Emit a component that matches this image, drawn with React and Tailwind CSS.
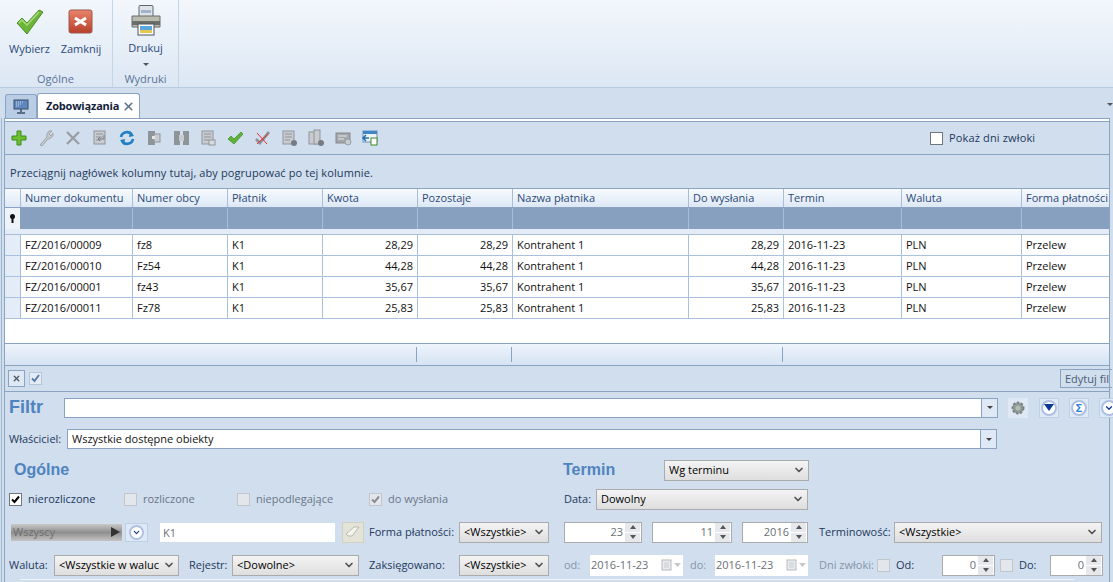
import { ChevronDown, X } from "lucide-react";

const font = { fontFamily: '"Open Sans", "Noto Sans", sans-serif' };

const columns = [
  { label: "Numer dokumentu", w: "w-[112px]" },
  { label: "Numer obcy", w: "w-[95px]" },
  { label: "Płatnik", w: "w-[95px]" },
  { label: "Kwota", w: "w-[95px]", right: true },
  { label: "Pozostaje", w: "w-[95px]", right: true },
  { label: "Nazwa płatnika", w: "w-[176px]" },
  { label: "Do wysłania", w: "w-[95px]", right: true },
  { label: "Termin", w: "w-[118px]" },
  { label: "Waluta", w: "w-[120px]" },
  { label: "Forma płatności", w: "w-[100px]" },
];

const rows = [
  ["FZ/2016/00009", "fz8", "K1", "28,29", "28,29", "Kontrahent 1", "28,29", "2016-11-23", "PLN", "Przelew"],
  ["FZ/2016/00010", "Fz54", "K1", "44,28", "44,28", "Kontrahent 1", "44,28", "2016-11-23", "PLN", "Przelew"],
  ["FZ/2016/00001", "fz43", "K1", "35,67", "35,67", "Kontrahent 1", "35,67", "2016-11-23", "PLN", "Przelew"],
  ["FZ/2016/00011", "Fz78", "K1", "25,83", "25,83", "Kontrahent 1", "25,83", "2016-11-23", "PLN", "Przelew"],
];

function BigCheck() {
  return (
    <svg width="28" height="26" viewBox="0 0 28 26">
      <path d="M1 14 L6 9 L11 14 L23 1 L27 3 L11 25 Z" fill="#6cb43a" stroke="#4d8f2a" strokeWidth="1" />
      <path d="M3 14 L6 11 L11 16 L23 3" fill="none" stroke="#a9dc7c" strokeWidth="1.5" />
    </svg>
  );
}

function BigClose() {
  return (
    <svg width="26" height="26" viewBox="0 0 26 26">
      <defs>
        <linearGradient id="closeFill" x1="0" y1="0" x2="0" y2="1">
          <stop offset="0" stopColor="#e8846c" />
          <stop offset="1" stopColor="#b8402a" />
        </linearGradient>
      </defs>
      <rect x="1" y="1" width="23" height="23" rx="2" fill="url(#closeFill)" stroke="#9c5a4a" />
      <path d="M7 9 L18 16 M18 9 L7 16" stroke="#fff" strokeWidth="3" />
    </svg>
  );
}

function Printer() {
  return (
    <svg width="30" height="31" viewBox="0 0 30 31">
      <rect x="8" y="0.5" width="14" height="11" rx="1" fill="#dfe3e8" stroke="#5d6670" />
      <rect x="10" y="5" width="10" height="3" fill="#9fb4cc" />
      <path d="M1 11 H29 V22 H1 Z" fill="#b9bbb1" stroke="#686c66" />
      <rect x="1" y="16" width="28" height="4" fill="#6a6e68" />
      <rect x="7" y="19" width="16" height="11" fill="#fff" stroke="#4d555e" />
      <path d="M9 21 H21 V25 H9 Z" fill="#5aa6dc" />
      <path d="M9 25 H21 V28 H9 Z" fill="#e5c84e" />
    </svg>
  );
}

function MonitorIcon() {
  return (
    <svg width="16" height="15" viewBox="0 0 16 15">
      <rect x="1" y="1" width="14" height="9" fill="#5f86bd" stroke="#3d4f6b" />
      <path d="M3 3 H11 M3 5 H9 M3 7 H7" stroke="#cfe0f4" strokeDasharray="1 1" />
      <path d="M8 10 V13 M4 14 H12" stroke="#3d4f6b" strokeWidth="1.5" />
    </svg>
  );
}

function ToolIcon({ children }) {
  return (
    <div className="w-[27px] flex items-center justify-center shrink-0">
      <svg width="18" height="18" viewBox="0 0 18 18">{children}</svg>
    </div>
  );
}

function GreyDoc({ extra }) {
  return (
    <>
      <rect x="3" y="2" width="11" height="13" fill="#c8ccd0" stroke="#8f9499" />
      <path d="M5 5 H12 M5 8 H12 M5 11 H10" stroke="#8f9499" />
      {extra}
    </>
  );
}

function Toolbar() {
  return (
    <div className="flex items-center">
      <ToolIcon>
        <path d="M7 2 H11 V7 H16 V11 H11 V16 H7 V11 H2 V7 H7 Z" fill="#6cbf2e" stroke="#3f8a1c" />
      </ToolIcon>
      <ToolIcon>
        <path d="M3 16 L10 8 C9 4 12 1 15 2 L12 5 L14 7 L16 4 C17 8 13 10 11 10 L5 17 Z" fill="#c4c7ca" stroke="#a3a7ab" />
      </ToolIcon>
      <ToolIcon>
        <path d="M3 3 L15 15 M15 3 L3 15" stroke="#9a9fa5" strokeWidth="2.4" />
      </ToolIcon>
      <ToolIcon>
        <GreyDoc extra={<path d="M7 10 H13 V6 M7 10 L9 8 M7 10 L9 12" stroke="#777c82" fill="none" />} />
      </ToolIcon>
      <ToolIcon>
        <path d="M3 8 A6 6 0 0 1 14 6 M15 10 A6 6 0 0 1 4 12" fill="none" stroke="#1f7fc4" strokeWidth="2.6" />
        <path d="M12 2 L16 7 L11 8 Z M6 16 L2 11 L7 10 Z" fill="#1f7fc4" />
      </ToolIcon>
      <ToolIcon>
        <rect x="3" y="2" width="7" height="14" fill="#8f9499" />
        <rect x="9" y="5" width="6" height="8" fill="#c8ccd0" stroke="#8f9499" />
        <rect x="7" y="7" width="3" height="3" fill="#e4e7ea" />
      </ToolIcon>
      <ToolIcon>
        <rect x="2" y="2" width="6" height="14" fill="#8f9499" />
        <rect x="11" y="2" width="6" height="14" fill="#8f9499" />
        <rect x="7" y="6" width="5" height="6" fill="#c8ccd0" />
      </ToolIcon>
      <ToolIcon>
        <GreyDoc extra={<rect x="10" y="11" width="6" height="5" fill="#d8dbde" stroke="#8f9499" />} />
      </ToolIcon>
      <ToolIcon>
        <path d="M2 10 L5 7 L8 10 L15 3 L17 5 L8 15 Z" fill="#5cb536" stroke="#3e8a24" strokeWidth="0.7" />
      </ToolIcon>
      <ToolIcon>
        <path d="M2 11 L4 9 L7 12 L15 2 L17 4 L7 16 Z" fill="#8d9197" />
        <path d="M4 4 L14 15 M15 5 L4 15" stroke="#e8302f" strokeWidth="1" />
      </ToolIcon>
      <ToolIcon>
        <GreyDoc extra={<circle cx="14" cy="14" r="3" fill="#777c82" />} />
      </ToolIcon>
      <ToolIcon>
        <rect x="2" y="3" width="8" height="12" fill="#c8ccd0" stroke="#8f9499" />
        <rect x="7" y="1" width="6" height="14" fill="#c8ccd0" stroke="#8f9499" />
        <circle cx="14" cy="14" r="3" fill="#777c82" />
      </ToolIcon>
      <ToolIcon>
        <rect x="2" y="4" width="14" height="10" fill="#a3a7ab" stroke="#85898e" />
        <path d="M4 7 H13 M4 10 H10" stroke="#e4e7ea" />
        <circle cx="14" cy="13" r="3" fill="#c8ccd0" stroke="#9a9fa5" />
      </ToolIcon>
      <ToolIcon>
        <rect x="2" y="2" width="14" height="11" fill="#eef3f8" stroke="#6a8fb5" />
        <rect x="2" y="2" width="14" height="3" fill="#3f86c8" />
        <path d="M2 9 H8 M5 6 L2 9 L5 12" stroke="#1f6fae" strokeWidth="1.5" fill="none" />
        <rect x="10" y="9" width="6" height="7" fill="#fff" stroke="#3e8a24" />
      </ToolIcon>
    </div>
  );
}

function Check({ checked, disabled, className = "" }) {
  return (
    <span
      className={`w-[13px] h-[13px] border shrink-0 flex items-center justify-center ${
        disabled ? "border-[#c2c6cb] bg-[#e3e6ea]" : "border-[#70767d] bg-white"
      } ${className}`}
    >
      {checked && (
        <svg width="11" height="11" viewBox="0 0 11 11">
          <path d="M2 5.5 L4.5 8 L9 2.5" fill="none" stroke={disabled ? "#8a8d91" : "#000"} strokeWidth="2" />
        </svg>
      )}
    </span>
  );
}

function Select({ value, w, ml = "" }) {
  return (
    <div
      className={`h-[21px] ${w} ${ml} shrink-0 flex items-center justify-between border border-[#a9abad] bg-gradient-to-b from-[#f4f4f4] to-[#dedede] pl-[4px] pr-[3px] overflow-hidden`}
    >
      <span className="whitespace-nowrap overflow-hidden text-black">{value}</span>
      <ChevronDown size={12} strokeWidth={3.5} className="text-[#555] shrink-0 ml-[3px]" />
    </div>
  );
}

function Spin({ value, w, ml = "" }) {
  return (
    <div className={`h-[21px] ${w} ${ml} shrink-0 flex items-center justify-end border border-[#a9abad] bg-white text-[#6a6f75]`}>
      <span>{value}</span>
      <div className="ml-[2px] mr-px w-[15px] h-[19px] flex flex-col gap-px">
        <div className="flex-1 flex items-center justify-center bg-[#e6e8eb]">
          <span className="w-0 h-0 border-x-[3px] border-x-transparent border-b-[4px] border-b-[#555]" />
        </div>
        <div className="flex-1 flex items-center justify-center bg-[#e6e8eb]">
          <span className="w-0 h-0 border-x-[3px] border-x-transparent border-t-[4px] border-t-[#555]" />
        </div>
      </div>
    </div>
  );
}

function DateBox({ value, ml = "" }) {
  return (
    <div className={`h-[21px] w-[93px] ${ml} shrink-0 flex items-center bg-white pl-px text-[#6a6f75]`}>
      <span>{value}</span>
      <svg width="22" height="12" viewBox="0 0 22 12" className="ml-auto">
        <rect x="1" y="1" width="9" height="10" fill="#e9ecef" stroke="#b5b9be" />
        <path d="M3 4 H8 M3 6 H8 M3 8 H8" stroke="#c8ccd0" />
        <path d="M13 4 H20 L16.5 8 Z" fill="#c5c8cc" />
      </svg>
    </div>
  );
}

function RoundIcon({ children, className = "" }) {
  return (
    <div className={`w-[20px] h-[20px] shrink-0 flex items-center justify-center bg-[#dfe9f6] border border-[#bcd0e8] ${className}`}>
      <div className="w-[16px] h-[16px] rounded-full bg-white border-2 border-[#aebfe0] flex items-center justify-center">{children}</div>
    </div>
  );
}

function Ribbon() {
  return (
    <div className="h-[88px] flex bg-gradient-to-b from-[#f3f7fc] to-[#dce7f4] border-b border-[#b9cbe0] text-[#2b4a78]">
      <div className="w-[113px] border-r border-[#c5d5e8] flex flex-col">
        <div className="flex pl-[9px] pt-[9px] h-[72px]">
          <div className="w-[42px] flex flex-col items-center">
            <div className="h-[26px] flex items-center"><BigCheck /></div>
            <span className="mt-[6px] -ml-px">Wybierz</span>
          </div>
          <div className="w-[44px] ml-[8px] flex flex-col items-center">
            <div className="h-[26px] flex items-center"><BigClose /></div>
            <span className="mt-[6px]">Zamknij</span>
          </div>
        </div>
        <div className="text-center text-[#5a7395] -ml-px">Ogólne</div>
      </div>
      <div className="w-[66px] border-r border-[#c5d5e8] flex flex-col items-center">
        <div className="h-[72px] pt-[5px] flex flex-col items-center">
          <Printer />
          <span className="mt-[4px]">Drukuj</span>
          <span className="mt-[6px] w-0 h-0 border-x-[3px] border-x-transparent border-t-[3px] border-t-[#555]" />
        </div>
        <div className="text-[#5a7395]">Wydruki</div>
      </div>
    </div>
  );
}

function TabStrip() {
  return (
    <div className="h-[30px] flex items-end pl-[5px] bg-[#d0deee] relative">
      <div className="w-[32px] h-[24px] flex items-center justify-center bg-[#b9cde4] border border-b-0 border-[#8aa3c2] rounded-t-[3px]">
        <MonitorIcon />
      </div>
      <div className="w-[103px] h-[25px] flex items-center pl-[8px] bg-white border border-b-0 border-[#8aa3c2] rounded-t-[3px] font-bold text-[#14233a] tracking-[-0.2px]">
        Zobowiązania
        <X size={13} strokeWidth={3} className="ml-[3px] text-[#5f7189]" />
      </div>
      <span className="absolute right-0 top-[15px] w-0 h-0 border-x-[3px] border-x-transparent border-t-[3px] border-t-[#555]" />
    </div>
  );
}

function Grid() {
  return (
    <div className="text-[#111] whitespace-nowrap">
      <div className="flex h-[20px] bg-gradient-to-b from-[#f7fafe] to-[#dde8f5] border-y border-[#8aa3c2] text-[#2b4a78]">
        <div className="w-[16px] shrink-0 border-r border-[#a9bdd6]" />
        {columns.map((c) => (
          <div key={c.label} className={`${c.w} shrink-0 pl-[4px] border-r border-[#a9bdd6] leading-[18px]`}>
            {c.label}
          </div>
        ))}
      </div>
      <div className="flex h-[21px] bg-[#88a0bf]">
        <div className="w-[15px] shrink-0 mr-px bg-[#eef3f9] flex items-center justify-center">
          <svg width="7" height="9" viewBox="0 0 7 9">
            <circle cx="3.5" cy="2.5" r="2.5" fill="#111" />
            <rect x="2.5" y="4" width="2" height="5" fill="#111" />
          </svg>
        </div>
        {columns.map((c) => (
          <div key={c.label} className={`${c.w} shrink-0 border-r border-[#a9bdd6]`} />
        ))}
      </div>
      <div className="h-[6px] bg-[#e3ecf7] border-b border-[#a9bdd6]" />
      {rows.map((row) => (
        <div key={row[0]} className="flex h-[21px] bg-white border-b border-[#a9c1de]">
          <div className="w-[16px] shrink-0 bg-[#e3ecf7] border-r border-[#a9bdd6]" />
          {row.map((cell, i) => (
            <div
              key={i}
              className={`${columns[i].w} shrink-0 pl-[4px] pr-[4px] leading-[20px] border-r border-[#a9c1de] ${columns[i].right ? "text-right" : ""}`}
            >
              {cell}
            </div>
          ))}
        </div>
      ))}
      <div className="h-[24px] bg-white" />
      <div className="flex h-[23px] py-[3px] bg-gradient-to-b from-[#eef4fc] to-[#d6e3f3] border-y border-[#8aa3c2]">
        <div className="w-[412px] shrink-0 border-r border-[#8aa3c2]" />
        <div className="w-[95px] shrink-0 border-r border-[#8aa3c2]" />
        <div className="w-[271px] shrink-0 border-r border-[#8aa3c2]" />
      </div>
    </div>
  );
}

function FilterPanel() {
  return (
    <div className="text-[#1e395b]">
      <div className="h-[26px] flex items-center pl-[3px] border-b border-[#8aa3c2]">
        <div className="w-[17px] h-[17px] border border-[#8aa3c2] bg-[#dfe9f6] flex items-center justify-center">
          <X size={9} strokeWidth={3.5} className="text-[#4a5564]" />
        </div>
        <div className="ml-[4px] w-[13px] h-[13px] border border-[#b6c6da] bg-[#e3ebf5] flex items-center justify-center">
          <svg width="11" height="11" viewBox="0 0 11 11">
            <path d="M2 5.5 L4.5 8 L9 2" fill="none" stroke="#5a7ba8" strokeWidth="2" />
          </svg>
        </div>
        <div className="ml-auto -mr-[3px] h-[19px] w-[52px] shrink-0 pl-[4px] border border-r-0 border-[#8aa3c2] text-[#4a5d75] leading-[17px] whitespace-nowrap">
          Edytuj fil
        </div>
      </div>

      <div className="h-[31px] flex items-center">
        <span className="w-[59px] shrink-0 pl-[4px] text-[18px] font-bold text-[#4f83c0]" style={{ fontFamily: '"Liberation Sans", sans-serif' }}>
          Filtr
        </span>
        <div className="w-[934px] h-[20px] shrink-0 flex bg-white border border-[#8aa3c2]">
          <div className="ml-auto w-[16px] bg-[#dfe9f6] border-l border-[#8aa3c2] flex items-center justify-center">
            <span className="w-0 h-0 border-x-[3px] border-x-transparent border-t-[3px] border-t-[#444]" />
          </div>
        </div>
        <div className="w-[20px] h-[20px] ml-[10px] shrink-0 bg-[#dfe9f6] flex items-center justify-center">
          <svg width="16" height="16" viewBox="0 0 16 16">
            <circle cx="8" cy="8" r="5.5" fill="#8f9a96" stroke="#7a8480" strokeWidth="2" strokeDasharray="2.5 1.5" />
            <circle cx="8" cy="8" r="2.5" fill="#b4bcb8" />
          </svg>
        </div>
        <RoundIcon className="ml-[11px]">
          <span className="w-0 h-0 border-x-[5px] border-x-transparent border-t-[7px] border-t-[#0a3a94]" />
        </RoundIcon>
        <RoundIcon className="ml-[10px]">
          <span className="text-[11px] leading-none font-bold text-[#2a7de1]">Σ</span>
        </RoundIcon>
        <RoundIcon className="ml-[10px]">
          <ChevronDown size={10} strokeWidth={3} className="text-[#0a3a94]" />
        </RoundIcon>
      </div>

      <div className="h-[32px] flex items-center">
        <span className="w-[62px] pl-[4px] shrink-0">Właściciel:</span>
        <div className="w-[930px] h-[20px] shrink-0 flex items-center bg-white border border-[#8aa3c2] pl-[4px] text-[#111]">
          Wszystkie dostępne obiekty
          <div className="ml-auto h-full w-[16px] bg-[#dfe9f6] border-l border-[#8aa3c2] flex items-center justify-center">
            <span className="w-0 h-0 border-x-[3px] border-x-transparent border-t-[3px] border-t-[#444]" />
          </div>
        </div>
      </div>

      <div className="h-[30px] flex items-center">
        <span className="w-[558px] shrink-0 pl-[9px] text-[16px] font-bold text-[#4f83c0]" style={{ fontFamily: '"Liberation Sans", sans-serif' }}>
          Ogólne
        </span>
        <span className="w-[101px] shrink-0 text-[16px] font-bold text-[#4f83c0]" style={{ fontFamily: '"Liberation Sans", sans-serif' }}>
          Termin
        </span>
        <Select value="Wg terminu" w="w-[145px]" />
      </div>

      <div className="h-[28px] flex items-center">
        <Check checked className="ml-[4px]" />
        <span className="ml-[6px] w-[96px]">nierozliczone</span>
        <Check disabled />
        <span className="ml-[6px] w-[94px] text-[#6a7686]">rozliczone</span>
        <Check disabled />
        <span className="ml-[6px] w-[113px] text-[#6a7686]">niepodlegające</span>
        <Check checked disabled />
        <span className="ml-[6px] w-[176px] text-[#6a7686]">do wysłania</span>
        <span className="w-[32px]">Data:</span>
        <Select value="Dowolny" w="w-[212px]" />
      </div>

      <div className="h-[38px] flex items-center">
        <div className="ml-[5px] w-[113px] h-[19px] shrink-0 flex items-center justify-between px-[2px] border border-[#d5dfec] bg-gradient-to-b from-[#c9c9c9] via-[#8f8f8f] to-[#c4c4c4] text-[#6f6f6f]">
          Wszyscy
          <span className="w-0 h-0 border-y-[5px] border-y-transparent border-l-[9px] border-l-[#333]" />
        </div>
        <div className="ml-[2px] w-[23px] h-[19px] shrink-0 bg-[#dfe9f6] border border-[#bcd0e8] flex items-center justify-center">
          <div className="w-[15px] h-[15px] rounded-full bg-white border-2 border-[#aebfe0] flex items-center justify-center">
            <ChevronDown size={9} strokeWidth={3} className="text-[#0a3a94]" />
          </div>
        </div>
        <div className="ml-[12px] w-[175px] h-[19px] shrink-0 bg-white pl-[3px] leading-[19px] text-[#6a6f75]">K1</div>
        <div className="ml-[7px] w-[22px] h-[21px] shrink-0 bg-[#e3e3d8] border border-[#d0d0c4] flex items-center justify-center">
          <svg width="16" height="14" viewBox="0 0 16 14">
            <path d="M1 9 L9 2 H14 L7 11 H3 Z" fill="#f4f4ee" stroke="#b9b9ad" />
          </svg>
        </div>
        <span className="ml-[5px] w-[90px] shrink-0">Forma płatności:</span>
        <Select value="<Wszystkie>" w="w-[90px]" />
        <Spin value="23" w="w-[78px]" ml="ml-[15px]" />
        <Spin value="11" w="w-[80px]" ml="ml-[10px]" />
        <Spin value="2016" w="w-[66px]" ml="ml-[10px]" />
        <span className="ml-[11px] w-[75px] shrink-0">Terminowość:</span>
        <Select value="<Wszystkie>" w="w-[208px]" />
      </div>

      <div className="h-[28px] flex items-center">
        <span className="ml-[4px] w-[45px] shrink-0">Waluta:</span>
        <Select value="<Wszystkie w waluc" w="w-[125px]" />
        <span className="ml-[10px] w-[43px] shrink-0">Rejestr:</span>
        <Select value="<Dowolne>" w="w-[127px]" />
        <span className="ml-[10px] w-[90px] shrink-0">Zaksięgowano:</span>
        <Select value="<Wszystkie>" w="w-[90px]" />
        <span className="ml-[15px] w-[26px] shrink-0 text-[#8795a8]">od:</span>
        <DateBox value="2016-11-23" />
        <span className="ml-[7px] w-[25px] shrink-0 text-[#8795a8]">do:</span>
        <DateBox value="2016-11-23" />
        <span className="ml-[11px] w-[58px] shrink-0 text-[#8795a8]">Dni zwłoki:</span>
        <Check disabled />
        <span className="ml-[6px] w-[46px] shrink-0">Od:</span>
        <Spin value="0" w="w-[53px]" />
        <Check disabled className="ml-[5px]" />
        <span className="ml-[6px] w-[31px] shrink-0">Do:</span>
        <Spin value="0" w="w-[53px]" />
      </div>
      <div className="h-px bg-[#eef3f9] ml-[15px] mr-[35px]" />
    </div>
  );
}

export default function App() {
  return (
    <div className="w-[1113px] h-[582px] overflow-hidden bg-[#d0deee] text-[11px]" style={font}>
      <Ribbon />
      <TabStrip />
      <div className="ml-px border-l border-[#9fb5d0] pl-[2px] pr-[3px] h-[464px]">
        <div className="border border-b-0 border-[#8aa3c2] h-full">
          <div className="h-[3px] bg-white border-b border-[#8aa3c2]" />
          <div className="h-[33px] flex items-center border-b border-[#8aa3c2] text-[#1e395b] relative">
            <Toolbar />
            <Check className="absolute left-[925px] top-[10px]" />
            <span className="absolute left-[944px] top-[8px] tracking-[0.15px]">Pokaż dni zwłoki</span>
          </div>
          <div className="h-[33px] leading-[35px] pl-[5px] text-[#1e395b] tracking-[0.1px]">
            Przeciągnij nagłówek kolumny tutaj, aby pogrupować po tej kolumnie.
          </div>
          <Grid />
          <FilterPanel />
        </div>
      </div>
    </div>
  );
}
